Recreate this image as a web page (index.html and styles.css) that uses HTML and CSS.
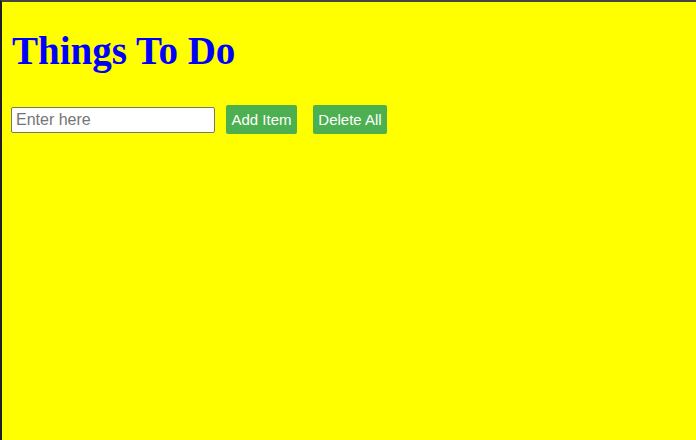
FILE: index.html
```html
<!DOCTYPE html>
<html>
<head>
<meta charset="utf-8">
<link rel="stylesheet" href="styles.css">
</head>
<body>
<div class="frame">
  <h1 class="title">Things To Do</h1>
  <div class="controls">
    <input class="entry" type="text" placeholder="Enter here">
    <button class="btn btn-add">Add Item</button>
    <button class="btn btn-del">Delete All</button>
  </div>
</div>
</body>
</html>
```
FILE: styles.css
```css
html, body {
  margin: 0;
  padding: 0;
  height: 100%;
  background: #ffff00;
}
.frame {
  box-sizing: border-box;
  height: 100%;
  border-top: 2px solid #444444;
  border-left: 2px solid #1e1e1e;
  padding: 8px 8px 8px 9px;
}
.title {
  margin: 19px 0 0 1px;
  font-family: "Liberation Serif", serif;
  font-weight: bold;
  font-size: 39px;
  line-height: 44px;
  color: #0000ff;
}
.controls {
  display: flex;
  align-items: center;
  margin-top: 32px;
}
.entry {
  box-sizing: border-box;
  width: 204px;
  height: 26px;
  margin: 0;
  padding: 1px 4px;
  border: 1px solid #767676;
  border-radius: 2px;
  background: #fff;
  font-family: "Liberation Sans", Arial, sans-serif;
  font-size: 16px;
  color: #000;
}
.entry::placeholder {
  color: #757575;
}
.btn {
  box-sizing: border-box;
  height: 29px;
  margin: 0;
  padding: 0 5px;
  border: none;
  border-radius: 2px;
  background: #4caf50;
  color: #fff;
  font-family: "Liberation Sans", Arial, sans-serif;
  font-size: 15px;
}
.btn-add {
  margin-left: 11px;
  width: 71px;
}
.btn-del {
  margin-left: 16px;
  width: 74px;
}
```
